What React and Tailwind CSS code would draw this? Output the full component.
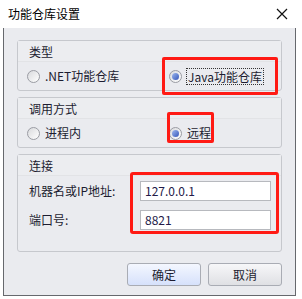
import React from "react";

const font = { fontFamily: '"Noto Sans CJK SC", "Noto Sans", sans-serif' };

function Radio({ checked }) {
  return (
    <span className="relative inline-block w-[13px] h-[13px] rounded-full border border-[#9a9ca3] bg-gradient-to-br from-[#d9dadd] to-white shrink-0">
      {checked && (
        <span className="absolute left-[2px] top-[2px] w-[7px] h-[7px] rounded-full bg-gradient-to-br from-[#9fb8ef] to-[#3856b8]" />
      )}
    </span>
  );
}

function Group({ title, children, className = "" }) {
  return (
    <div className={"border border-[#c6c8cd] rounded-[3px] " + className}>
      <div className="h-[21px] px-[11px] flex items-end text-[12px] leading-none pb-[3px] border-b border-[#e2e3e6] bg-[#ecedf0]">
        {title}
      </div>
      {children}
    </div>
  );
}

export default function App() {
  return (
    <div className="w-[302px] h-[299px] bg-white relative text-[#1c1c30]" style={font}>
      <div className="h-[28px] flex items-center justify-between pl-[8px] pr-[12px]">
        <span className="text-[12px] leading-none text-black">功能仓库设置</span>
        <svg width="12" height="12" viewBox="0 0 12 12" className="mr-[2px]">
          <path d="M1 1 L11 11 M11 1 L1 11" stroke="#111" strokeWidth="1.2" />
        </svg>
      </div>
      <div className="ml-[3px] w-[293px] h-[268px] border-x border-b border-[#66686d] bg-[#eaebef] px-[13px] pt-[12px]">
        <Group title="类型" className="h-[51px]">
          <div className="flex items-center h-[28px] text-[12px]">
            <div className="flex items-center gap-[5px] pl-[9px] w-[151px]">
              <Radio />
              <span>.NET功能仓库</span>
            </div>
            <div className="flex items-center gap-[4px]">
              <Radio checked />
              <span className="border border-dotted border-[#333] leading-[15px] px-px">Java功能仓库</span>
            </div>
          </div>
        </Group>
        <Group title="调用方式" className="h-[51px] mt-[6px]">
          <div className="flex items-center h-[28px] text-[12px]">
            <div className="flex items-center gap-[5px] pl-[9px] w-[151px]">
              <Radio />
              <span>进程内</span>
            </div>
            <div className="flex items-center gap-[5px]">
              <Radio checked />
              <span>远程</span>
            </div>
          </div>
        </Group>
        <Group title="连接" className="h-[98px] mt-[6px]">
          <div className="pl-[11px] pr-[10px] pt-[5px] text-[12px] flex flex-col gap-[9px]">
            <div className="flex items-center justify-between">
              <span>机器名或IP地址:</span>
              <div className="w-[131px] h-[20px] border border-[#b7b9be] bg-white flex items-center px-[4px] text-[#231a48]">127.0.0.1</div>
            </div>
            <div className="flex items-center justify-between">
              <span>端口号:</span>
              <div className="w-[131px] h-[20px] border border-[#b7b9be] bg-white flex items-center px-[4px] text-[#231a48]">8821</div>
            </div>
          </div>
        </Group>
        <div className="flex justify-end gap-[7px] mt-[11px]">
          <button className="w-[74px] h-[23px] rounded-[3px] border border-[#a9acb4] bg-gradient-to-b from-[#f4f7ff] to-[#d6e1fb] text-[12px] leading-none">确定</button>
          <button className="w-[74px] h-[23px] rounded-[3px] border border-[#a9acb4] bg-gradient-to-b from-[#f7f7f9] to-[#dfe0e4] text-[12px] leading-none">取消</button>
        </div>
      </div>
      <div className="absolute left-[162px] top-[57px] w-[116px] h-[38px] border-[3px] border-[#ff1a14] rounded-[2px] pointer-events-none" />
      <div className="absolute left-[167px] top-[112px] w-[47px] h-[31px] border-[3px] border-[#ff1a14] rounded-[2px] pointer-events-none" />
      <div className="absolute left-[130px] top-[172px] w-[149px] h-[62px] border-[3px] border-[#ff1a14] rounded-[3px] pointer-events-none" />
    </div>
  );
}
